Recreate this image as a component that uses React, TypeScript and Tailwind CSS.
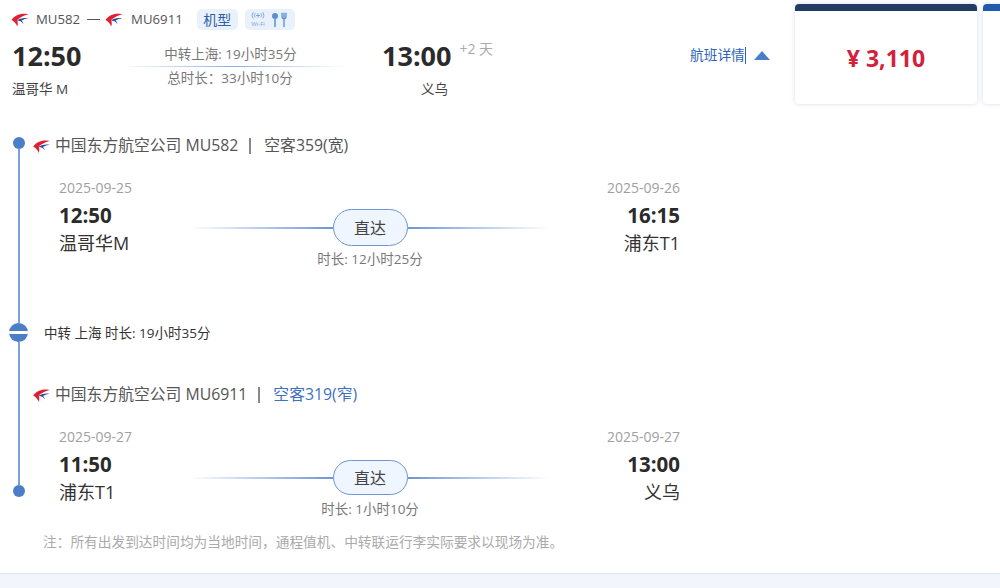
function AirlineLogo({ className }: { className: string }) {
  return (
    <svg viewBox="0 0 20 16" className={className} aria-hidden="true">
      <path d="M19.500 1.500C11 -.5 3.500 3 .3 8c3.200 1.500 5.200 4.500 6.700 7.500.7-3.500.5-5.500-.3-7.500C10 5 14.500 3 19.500 1.500z" fill="#e0202f" />
      <path d="M19.500 6C14 5.300 9 6.300 6.500 8.700c3 0 5.500 1.300 7.500 3.800-.3-1.800-1.200-3-2.300-4 2.500-1.200 5-2 7.800-2.500z" fill="#2b4a9b" />
    </svg>
  );
}

function ServiceIcons() {
  return (
    <svg viewBox="0 0 40 18" className="h-[18px] w-[42px]" aria-hidden="true">
      <g fill="none" stroke="#7fa3d6" strokeWidth="1" strokeLinecap="round">
        <path d="M3 1.500c-1.200 1.800-1.200 3.700 0 5.500M5 2.500c-.7 1.100-.7 2.400 0 3.500M11 2.500c.7 1.100.7 2.400 0 3.500M13 1.500c1.200 1.800 1.200 3.700 0 5.500" />
        <path d="M8 2.800v3.400M6.500 4.500h3" />
      </g>
      <text x="8" y="14.500" textAnchor="middle" fontSize="6" fill="#7fa3d6">Wi-Fi</text>
      <circle cx="25" cy="5" r="3" fill="#5b8fd0" />
      <path d="M25 7v9" stroke="#5b8fd0" strokeWidth="1.500" />
      <path d="M32 1.800v3.500c0 1.500 1 2.500 2 2.500s2-1 2-2.500V1.800M34 1.800V16" fill="none" stroke="#5b8fd0" strokeWidth="1.300" />
    </svg>
  );
}

function Segment({
  airline,
  plane,
  planeClass,
  depDate,
  depTime,
  depPlace,
  arrDate,
  arrTime,
  arrPlace,
  duration,
  pillClass,
  lineClass,
  durationClass
}: {
  airline: string;
  plane: string;
  planeClass: string;
  depDate: string;
  depTime: string;
  depPlace: string;
  arrDate: string;
  arrTime: string;
  arrPlace: string;
  duration: string;
  pillClass: string;
  lineClass: string;
  durationClass: string;
}) {
  return (
    <div>
      <div className="flex h-[22px] items-center pt-[2px] text-[15.800px] text-[#555]">
        <AirlineLogo className="h-[15px] w-[17px]" />
        <span className="ml-[5px]">{airline}</span>
        <span className="mr-[13px] ml-[11px] h-[16px] w-[2px] bg-[#888]" />
        <span className={planeClass}>{plane}</span>
      </div>
      <div className="mt-[22px] grid w-[647px] grid-cols-[131px_360px_130px] pl-[26px]">
        <div>
          <div className="h-[20px] text-[14px] leading-[20px] text-[#a0a0a0]">{depDate}</div>
          <div className="mt-[3px] h-[28px] text-[20.500px] leading-[28px] font-bold text-[#2b2b2b]">{depTime}</div>
          <div className="mt-[2px] h-[24px] text-[18px] leading-[24px] text-[#333]">{depPlace}</div>
        </div>
        <div className={`flex flex-col items-center ${lineClass}`}>
          <div className="flex w-full items-center">
            <div className="h-[2px] flex-1 bg-gradient-to-r from-white to-[#6f95d6]" />
            <div className={`flex w-[75px] items-center justify-center rounded-full border border-[#6f95d6] bg-[#f0f6ff] text-[16px] text-[#444] ${pillClass}`}>
              直达
            </div>
            <div className="h-[2px] flex-1 bg-gradient-to-l from-white to-[#6f95d6]" />
          </div>
          <div className={`text-[13.500px] leading-[18px] text-[#777] ${durationClass}`}>{duration}</div>
        </div>
        <div className="text-right">
          <div className="h-[20px] text-[14px] leading-[20px] text-[#a0a0a0]">{arrDate}</div>
          <div className="mt-[3px] h-[28px] text-[20.500px] leading-[28px] font-bold text-[#2b2b2b]">{arrTime}</div>
          <div className="mt-[2px] h-[24px] text-[18px] leading-[24px] text-[#333]">{arrPlace}</div>
        </div>
      </div>
    </div>
  );
}

export default function App() {
  return (
    <div className="h-[588px] w-[1000px] overflow-hidden bg-[#f2f5fb] font-['Open_Sans','Noto_Sans_CJK_SC',sans-serif]">
      <div className="h-[574px] border-b border-[#dfe6f3] bg-white">
        {/* summary row */}
        <div className="flex h-[134px] items-start">
          <div className="w-[795px] shrink-0">
            <div className="flex h-[30px] items-end pl-[11px]">
              <div className="flex h-[21px] items-center text-[13.200px] text-[#555]">
                <AirlineLogo className="h-[14px] w-[18px]" />
                <span className="ml-[7px]">MU582</span>
                <span className="ml-[7px] h-[1px] w-[13px] bg-[#555]" />
                <AirlineLogo className="ml-[5px] h-[14px] w-[18px]" />
                <span className="ml-[8px]">MU6911</span>
                <span className="ml-[14px] flex h-[21px] w-[41px] items-center justify-center rounded-[5px] bg-[#e9f1fc] text-[14px] text-[#2d5fa8]">机型</span>
                <span className="ml-[7px] flex h-[21px] w-[50px] items-center justify-center rounded-[5px] bg-[#e9f1fc]">
                  <ServiceIcons />
                </span>
              </div>
            </div>
            <div className="flex pl-[12px]">
              <div className="w-[108px]">
                <div className="mt-[9px] h-[34px] text-[27px] leading-[34px] font-bold text-[#2b2b2b]">12:50</div>
                <div className="mt-[6px] h-[20px] text-[13.500px] leading-[20px] text-[#444]">温哥华 M</div>
              </div>
              <div className="flex w-[225px] flex-col items-center pt-[15px]">
                <div className="h-[18px] pr-[4px] text-[13.500px] leading-[18px] text-[#777]">中转上海: 19小时35分</div>
                <div className="mt-[3px] h-[1px] w-full bg-gradient-to-r from-white via-[#8fb0e2] to-white" />
                <div className="mt-[2px] h-[18px] pr-[5px] text-[13.500px] leading-[18px] text-[#777]">总时长：33小时10分</div>
              </div>
              <div className="ml-[37px] w-[120px]">
                <div className="mt-[9px] flex h-[34px] items-start">
                  <span className="text-[27px] leading-[34px] font-bold text-[#2b2b2b]">13:00</span>
                  <span className="ml-[8px] text-[14px] leading-[20px] text-[#aaa]">+2 天</span>
                </div>
                <div className="mt-[6px] h-[20px] pl-[39px] text-[13.500px] leading-[20px] text-[#444]">义乌</div>
              </div>
              <div className="mt-[16px] ml-[188px] flex h-[18px] w-[80px] shrink-0 items-center self-start">
                <span className="whitespace-nowrap text-[13.700px] text-[#2d63b8]">航班详情</span>
                <span className="h-[17px] w-[2px] bg-[#2d63b8]" />
                <span className="ml-[8px] h-0 w-0 border-x-[8px] border-b-[9px] border-x-transparent border-b-[#4a7fc7]" />
              </div>
            </div>
          </div>
          <div className="mt-[4px] flex gap-[6px]">
            <div className="h-[100px] w-[182px] shrink-0 overflow-hidden rounded-[4px] bg-white shadow-[0_0_4px_rgba(80,110,170,0.25)]">
              <div className="h-[7px] bg-[#243c63]" />
              <div className="flex h-[93px] items-center justify-center pt-[1px] text-[23px] font-bold text-[#d4213b]">¥ 3,110</div>
            </div>
            <div className="h-[100px] w-[182px] shrink-0 overflow-hidden rounded-[4px] bg-white shadow-[0_0_4px_rgba(80,110,170,0.25)]">
              <div className="h-[7px] bg-[#1f5cae]" />
            </div>
          </div>
        </div>

        {/* route detail */}
        <div className="flex pl-[9px]">
          <div className="mt-[3px] flex h-[360px] w-[19px] flex-col items-center">
            <span className="h-[12px] w-[12px] rounded-full bg-[#4a7fc7]" />
            <span className="h-[174px] w-[2px] bg-[#7ba0dc]" />
            <span className="flex h-[19px] w-[19px] flex-col justify-center overflow-hidden rounded-full bg-[#4a7fc7]">
              <span className="h-[3px] bg-white" />
            </span>
            <span className="w-[2px] flex-1 bg-[#7ba0dc]" />
            <span className="h-[12px] w-[12px] rounded-full bg-[#4a7fc7]" />
          </div>
          <div className="ml-[5px]">
            <Segment
              airline="中国东方航空公司 MU582"
              plane="空客359(宽)"
              planeClass="text-[#555]"
              depDate="2025-09-25"
              depTime="12:50"
              depPlace="温哥华M"
              arrDate="2025-09-26"
              arrTime="16:15"
              arrPlace="浦东T1"
              duration="时长: 12小时25分"
              pillClass="h-[37px]"
              lineClass="pt-[31px]"
              durationClass="mt-[4px]"
            />
            <div className="mt-[55px] h-[20px] pl-[11px] text-[13.500px] leading-[20px] text-[#333]">中转 上海 时长: 19小时35分</div>
            <div className="mt-[40px]">
              <Segment
                airline="中国东方航空公司 MU6911"
                plane="空客319(窄)"
                planeClass="text-[#3f72bd]"
                depDate="2025-09-27"
                depTime="11:50"
                depPlace="浦东T1"
                arrDate="2025-09-27"
                arrTime="13:00"
                arrPlace="义乌"
                duration="时长: 1小时10分"
                pillClass="h-[35px]"
                lineClass="pt-[33px]"
                durationClass="mt-[5px]"
              />
            </div>
            <div className="mt-[15px] pl-[10px] text-[13.700px] leading-[18px] text-[#aaa]">注：所有出发到达时间均为当地时间，通程值机、中转联运行李实际要求以现场为准。</div>
          </div>
        </div>
      </div>
    </div>
  );
}
